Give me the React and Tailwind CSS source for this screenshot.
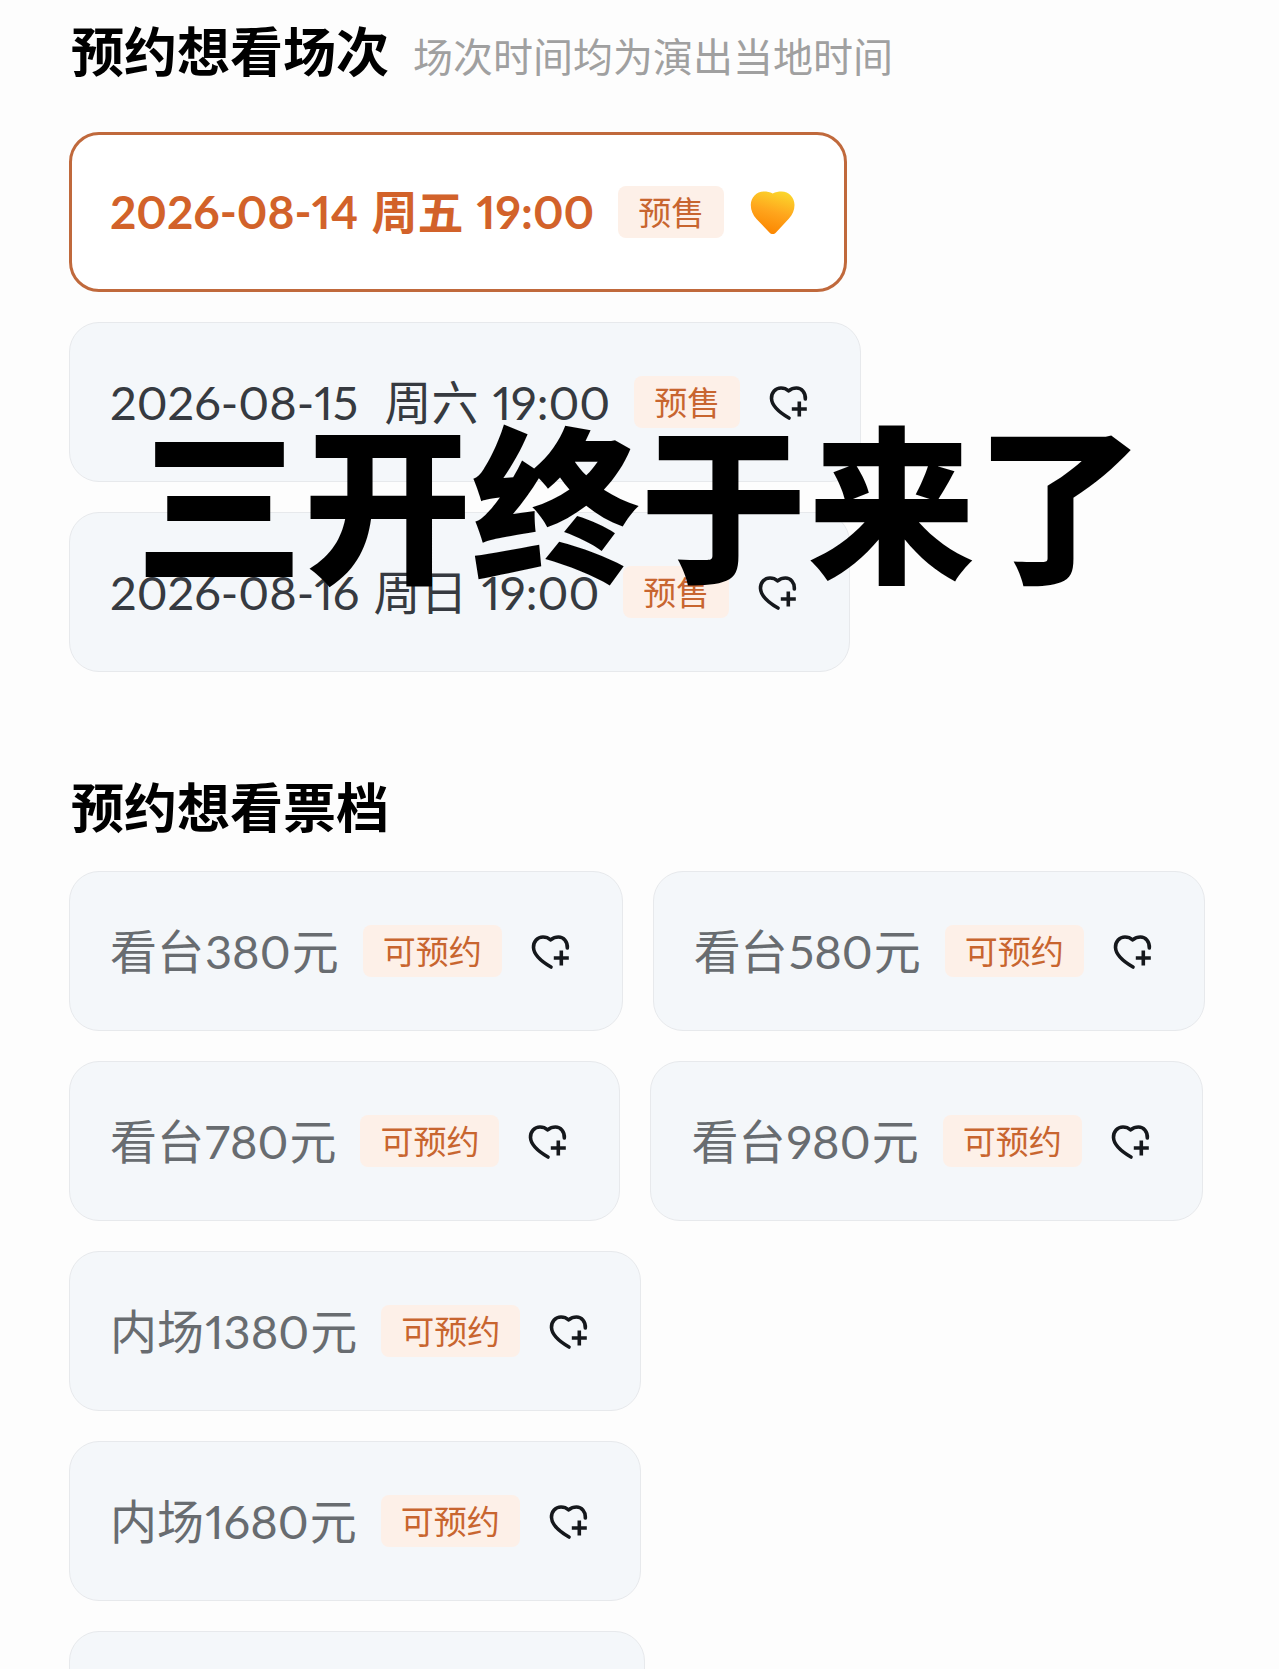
import React from 'react';
import clsx from 'clsx';

const sessions = [
  { id: 's1', date: '2026-08-14 ', day: '周五', time: ' 19:00', tag: '预售', selected: true },
  { id: 's2', date: '2026-08-15\u00a0 ', day: '周六', time: ' 19:00', tag: '预售' },
  { id: 's3', date: '2026-08-16 ', day: '周日', time: ' 19:00', tag: '预售' },
];

const tickets = [
  { id: 't1', area: '看台', price: 380, tag: '可预约' },
  { id: 't2', area: '看台', price: 580, tag: '可预约' },
  { id: 't3', area: '看台', price: 780, tag: '可预约' },
  { id: 't4', area: '看台', price: 980, tag: '可预约' },
  { id: 't5', area: '内场', price: 1380, tag: '可预约' },
  { id: 't6', area: '内场', price: 1680, tag: '可预约' },
];

const HeartPlus = () => (
  <svg viewBox="0 0 48 48" className="size-12 shrink-0 text-[#15181c]" fill="none" stroke="currentColor" strokeWidth="3.6" aria-hidden="true">
    <path
      strokeLinecap="round"
      strokeLinejoin="round"
      d="M41.3 21C41.8 14.5 37.5 10 32.5 10C29.5 10 27 11 24.7 12.9C22.5 11 20 10 17 10C11.5 10 7.3 14.5 7.5 20.5C7.8 27.5 16 34.8 25 40"
    />
    <path d="M35.3 23.5V38.5M27.8 31H42.8" />
  </svg>
);

const HeartFilled = () => (
  <svg viewBox="0 0 48 48" className="size-12 shrink-0" aria-hidden="true">
    <defs>
      <linearGradient id="gold" x1="0.7" y1="0" x2="0.4" y2="1">
        <stop offset="0" stopColor="#fbd62c" />
        <stop offset="0.5" stopColor="#ffa51c" />
        <stop offset="1" stopColor="#fb8500" />
      </linearGradient>
    </defs>
    <path
      fill="url(#gold)"
      d="M24.7 5.5C27.5 4 30.5 3.5 33.5 3.5C41 3.5 46.5 9.5 46.5 17C46.5 22.5 44.5 26.5 41 30.5L28 44.5C26 46.6 23.4 46.6 21.4 44.5L8.5 31C5 27 2.8 22.5 2.8 17C2.8 9.5 8.5 3.5 15.8 3.5C19 3.5 22 4 24.7 5.5Z"
    />
  </svg>
);

const OptionCard = ({ tag, selected, muted, children }) => (
  <button
    type="button"
    aria-pressed={Boolean(selected)}
    className={clsx(
      'flex h-40 items-center gap-6 rounded-[30px] pr-12 whitespace-nowrap',
      selected
        ? 'border-3 border-[#c0693c] bg-white pl-[38px] text-[46px] font-bold text-[#d2622a]'
        : 'border border-[#e7e9ec] bg-[#f4f7fa] pl-10 text-[47px] font-normal',
      !selected && (muted ? 'text-[#686c70]' : 'text-[#363a40]')
    )}
  >
    <span className="leading-[64px] proportional-nums">{children}</span>
    <span className="rounded-lg bg-[#fdf0e8] px-5 text-[33px] leading-[52px] font-normal text-[#c8652f]">{tag}</span>
    {selected ? <HeartFilled /> : <HeartPlus />}
  </button>
);

export default function App() {
  return (
    <main className="relative h-screen overflow-hidden bg-[#fdfdfd] pt-4 pr-[60px] pl-[69px] font-[Lato,'Noto_Sans_CJK_SC',sans-serif]">
      <section>
        <div className="mb-11 flex items-baseline gap-6 pl-0.5 whitespace-nowrap">
          <h2 className="text-[53px] leading-[72px] font-bold text-black">预约想看场次</h2>
          <p className="text-[40px] leading-[56px] text-[#a0a0a0]">场次时间均为演出当地时间</p>
        </div>
        <div className="flex flex-col items-start gap-[30px]">
          {sessions.map(({ id, date, day, time, ...s }) => (
            <OptionCard key={id} {...s}>
              {date}
              <span className="mx-0.5">{day}</span>
              {time}
            </OptionCard>
          ))}
        </div>
      </section>

      <section className="mt-[100px]">
        <h2 className="mb-[27px] pl-0.5 text-[53px] leading-[72px] font-bold text-black">预约想看票档</h2>
        <div className="flex flex-wrap gap-[30px]">
          {tickets.map(({ id, area, price, ...t }) => (
            <OptionCard key={id} {...t} muted>
              {area}
              <span className="mx-px">{price}</span>元
            </OptionCard>
          ))}
          <div className="h-40 w-144 rounded-[30px] border border-[#e7e9ec] bg-[#f4f7fa]" />
        </div>
      </section>

      {/* caption laid over the session list */}
      <p className="pointer-events-none absolute inset-x-0 top-[405px] text-center text-[168px] leading-[200px] font-black whitespace-nowrap text-black">
        三开终于来了
      </p>
    </main>
  );
}
